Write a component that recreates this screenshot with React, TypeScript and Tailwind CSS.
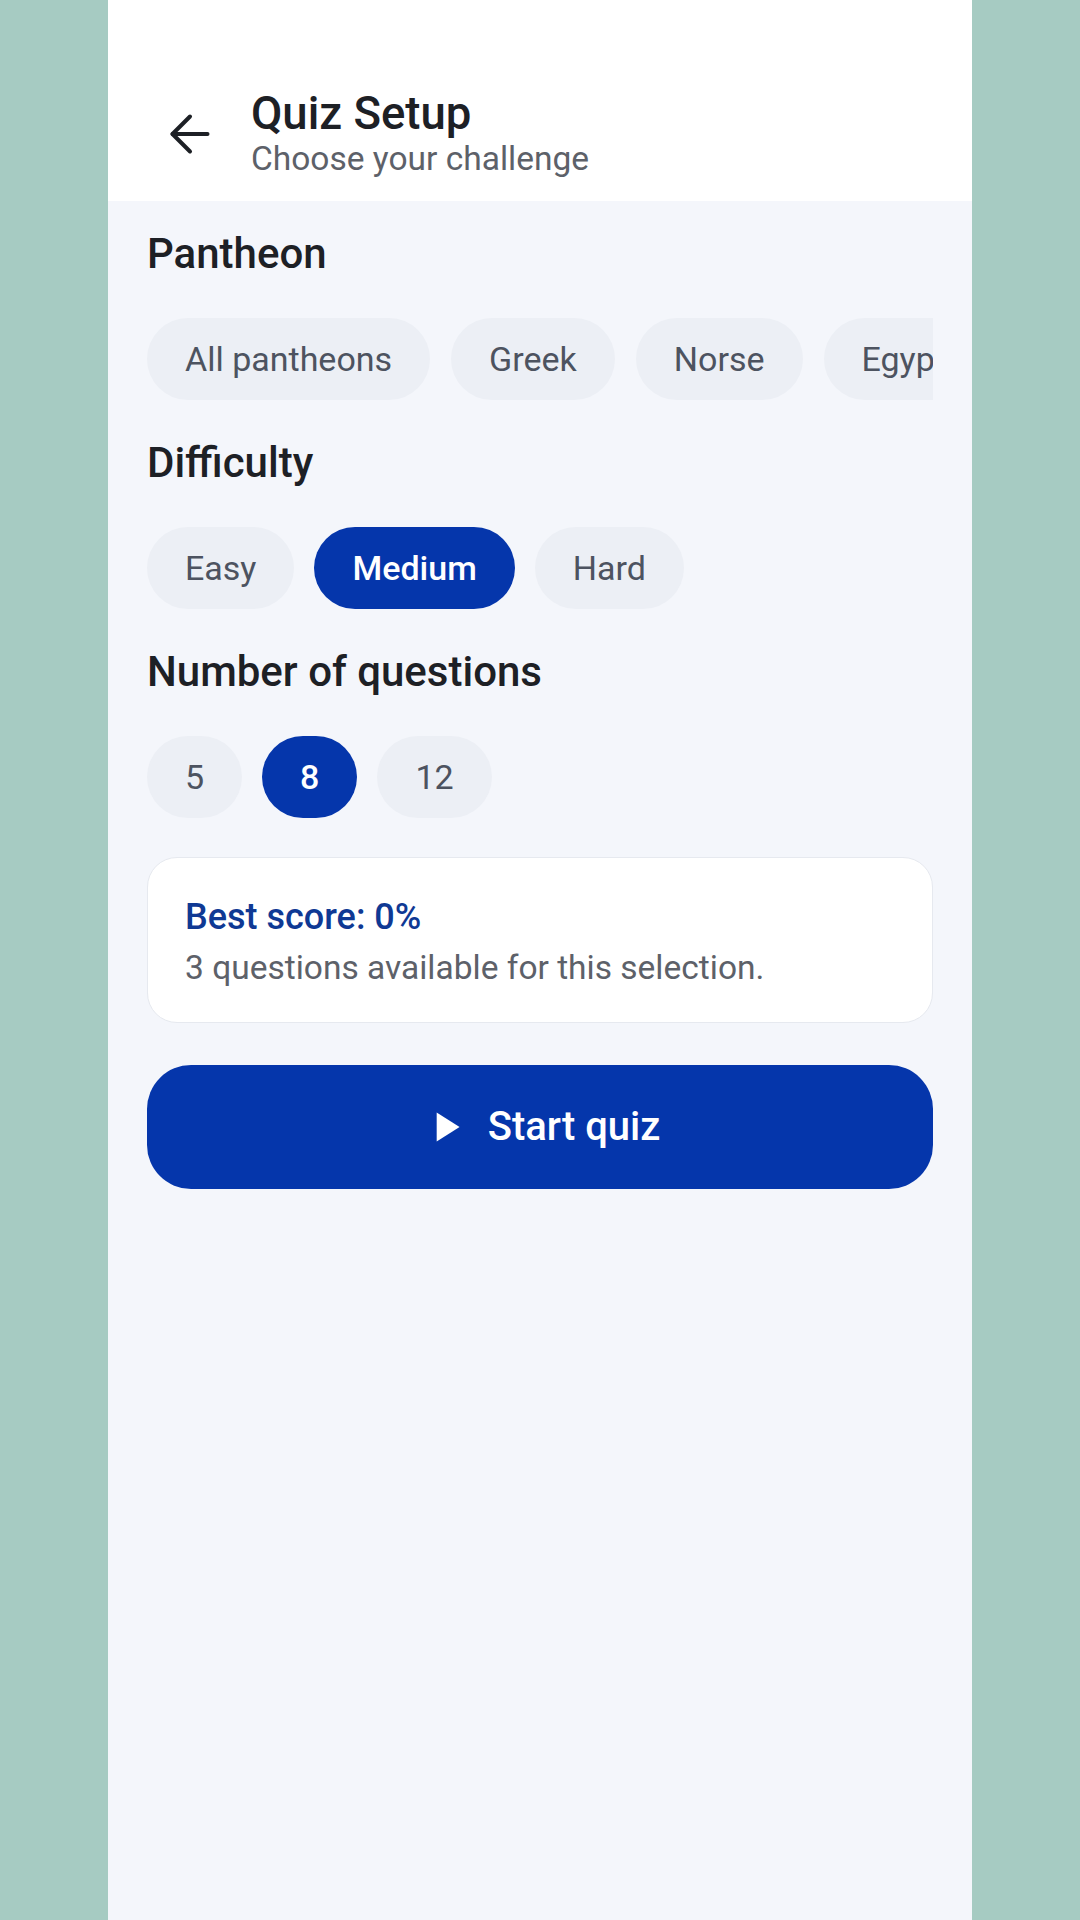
import { useState } from "react"

const pantheons = ["All pantheons", "Greek", "Norse", "Egyptian", "Roman"]
const difficulties = ["Easy", "Medium", "Hard"]
const counts = ["5", "8", "12"]

function Chip({ label, active, onClick }: { label: string; active: boolean; onClick: () => void }) {
  return (
    <button
      onClick={onClick}
      className={
        active
          ? "h-[82px] shrink-0 rounded-full bg-[#0536ab] px-[38px] text-[34px] font-medium leading-[40px] text-white"
          : "h-[82px] shrink-0 rounded-full bg-[#eceff5] px-[38px] text-[34px] font-normal leading-[40px] text-[#4d5360]"
      }
    >
      {label}
    </button>
  )
}

function Section({ title, children, first }: { title: string; children: React.ReactNode; first?: boolean }) {
  return (
    <div className={first ? "mt-[28px]" : "mt-[38px]"}>
      <h2 className="mb-[39px] text-[42px] font-medium leading-[50px] text-[#1d2025]">{title}</h2>
      {children}
    </div>
  )
}

export default function App() {
  const [pantheon, setPantheon] = useState("")
  const [difficulty, setDifficulty] = useState("Medium")
  const [count, setCount] = useState("8")

  return (
    <div className="flex min-h-screen w-full justify-center bg-[#a6cbc2] font-['Roboto','Liberation_Sans',sans-serif]">
      <div className="flex min-h-[1920px] w-[864px] flex-col bg-[#f4f6fb]">
        {/* Header */}
        <header className="flex h-[201px] items-start bg-white pl-[52px] pt-[91px]">
          <button className="mt-[13px] shrink-0 text-[#1d2025]" aria-label="Back">
            <svg width="60" height="60" viewBox="0 0 24 24" fill="none" stroke="currentColor" strokeWidth="1.6" strokeLinecap="round" strokeLinejoin="round">
              <path d="m12 19-7-7 7-7" />
              <path d="M19 12H5" />
            </svg>
          </button>
          <div className="ml-[31px] flex flex-col">
            <h1 className="text-[45.5px] font-medium leading-[46px] text-[#1d2025]">Quiz Setup</h1>
            <p className="mt-[5px] text-[33.5px] leading-[34px] text-[#5d6169]">Choose your challenge</p>
          </div>
        </header>

        {/* Content */}
        <main className="flex flex-col px-[39px]">
          <Section title="Pantheon" first>
            <div className="flex gap-[21px] overflow-hidden">
              {pantheons.map((p) => (
                <Chip key={p} label={p} active={pantheon === p} onClick={() => setPantheon(p)} />
              ))}
            </div>
          </Section>

          <Section title="Difficulty">
            <div className="flex gap-[20px]">
              {difficulties.map((d) => (
                <Chip key={d} label={d} active={difficulty === d} onClick={() => setDifficulty(d)} />
              ))}
            </div>
          </Section>

          <Section title="Number of questions">
            <div className="flex gap-[20px]">
              {counts.map((c) => (
                <Chip key={c} label={c} active={count === c} onClick={() => setCount(c)} />
              ))}
            </div>
          </Section>

          {/* Summary card */}
          <div className="mt-[39px] h-[166px] rounded-[30px] border border-[#e6e9ef] bg-white px-[37px] pt-[37px]">
            <div className="text-[36px] font-medium leading-[44px] text-[#0f3994]">Best score: 0%</div>
            <div className="mt-[9px] text-[33.5px] leading-[40px] text-[#5d6169]">3 questions available for this selection.</div>
          </div>

          {/* Start button */}
          <button className="mt-[42px] flex h-[124px] items-center justify-center rounded-[44px] bg-[#0536ab] text-white">
            <svg width="50" height="50" viewBox="0 0 24 24" fill="currentColor">
              <path d="M8 5v14l11-7z" />
            </svg>
            <span className="ml-[18px] text-[40px] font-medium leading-[48px]">Start quiz</span>
          </button>
        </main>
      </div>
    </div>
  )
}
